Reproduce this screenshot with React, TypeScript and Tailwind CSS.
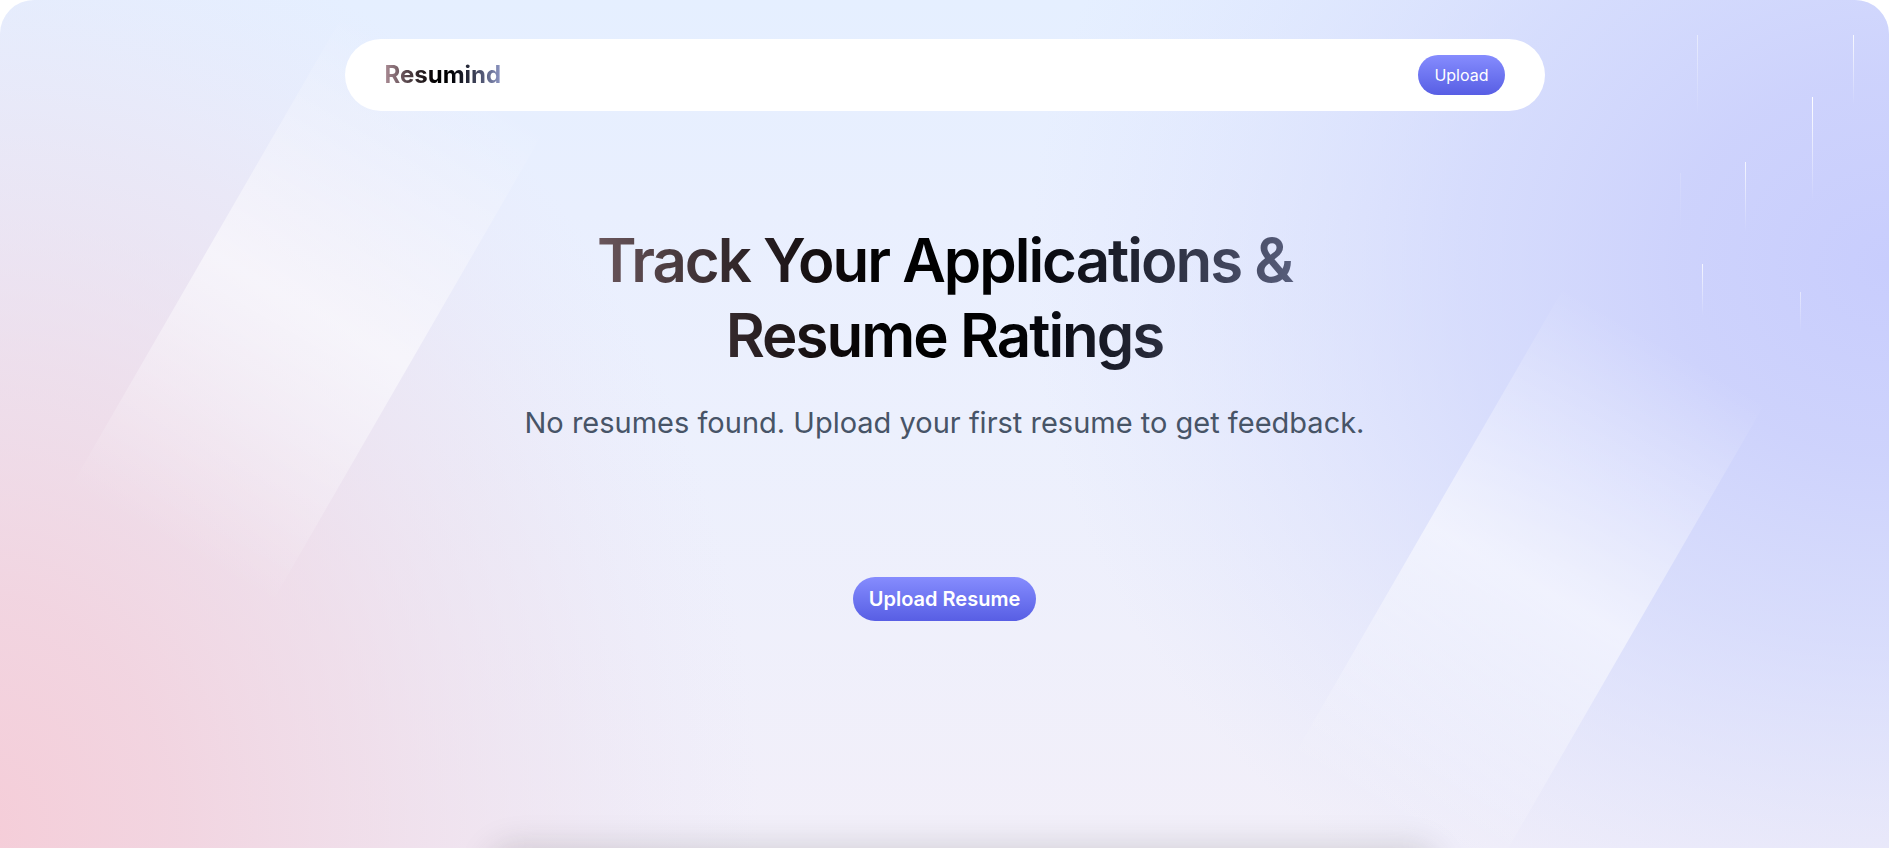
const streaks = [
  { x: 1697, y: 35, h: 80, o: 0.5 },
  { x: 1853, y: 35, h: 70, o: 0.85 },
  { x: 1812, y: 97, h: 104, o: 1 },
  { x: 1745, y: 162, h: 70, o: 0.8 },
  { x: 1680, y: 173, h: 60, o: 0.15 },
  { x: 1702, y: 264, h: 52, o: 0.8 },
  { x: 1800, y: 292, h: 40, o: 0.5 },
];

function Backdrop() {
  return (
    <svg
      aria-hidden="true"
      className="absolute inset-0 h-full w-full"
      viewBox="0 0 1889 848"
      preserveAspectRatio="xMidYMid slice"
    >
      <defs>
        <linearGradient id="base" x1="0" y1="0" x2="0" y2="1">
          <stop offset="0" stopColor="#e5efff" />
          <stop offset="0.25" stopColor="#e9effe" />
          <stop offset="0.5" stopColor="#ecf0fd" />
          <stop offset="1" stopColor="#f2eff9" />
        </linearGradient>
        <radialGradient
          id="pink"
          gradientUnits="userSpaceOnUse"
          cx="0"
          cy="0"
          r="1"
          gradientTransform="translate(-20 830) scale(780 940)"
        >
          <stop offset="0" stopColor="#f5cdd8" />
          <stop offset="0.25" stopColor="#f2d0dc" stopOpacity="0.85" />
          <stop offset="0.5" stopColor="#efd4e1" stopOpacity="0.6" />
          <stop offset="0.75" stopColor="#ebdbea" stopOpacity="0.34" />
          <stop offset="1" stopColor="#e8e2f6" stopOpacity="0" />
        </radialGradient>
        <radialGradient
          id="blue"
          gradientUnits="userSpaceOnUse"
          cx="0"
          cy="0"
          r="1"
          gradientTransform="translate(1889 265) scale(860 760)"
        >
          <stop offset="0" stopColor="#c8cdfd" />
          <stop offset="0.25" stopColor="#cbd0fc" stopOpacity="0.92" />
          <stop offset="0.5" stopColor="#ced4fc" stopOpacity="0.68" />
          <stop offset="0.75" stopColor="#d2d8fc" stopOpacity="0.32" />
          <stop offset="1" stopColor="#d8defe" stopOpacity="0" />
        </radialGradient>
        <linearGradient id="beam" x1="0" y1="0" x2="0" y2="1">
          <stop offset="0" stopColor="#fff" stopOpacity="0" />
          <stop offset="0.5" stopColor="#fff" stopOpacity="0.56" />
          <stop offset="1" stopColor="#fff" stopOpacity="0" />
        </linearGradient>
        <linearGradient id="streak" x1="0" y1="0" x2="0" y2="1">
          <stop offset="0" stopColor="#fff" />
          <stop offset="1" stopColor="#fff" stopOpacity="0" />
        </linearGradient>
      </defs>
      <rect width="1889" height="848" fill="url(#base)" />
      <rect width="1889" height="848" fill="url(#pink)" />
      <rect width="1889" height="848" fill="url(#blue)" />
      <g fill="url(#beam)">
        <rect x="-116" y="-275" width="232" height="550" transform="translate(308 308) rotate(30)" />
        <rect x="-116" y="-275" width="232" height="550" transform="translate(1528 582) rotate(30)" />
      </g>
      <g fill="url(#streak)">
        {streaks.map((s) => (
          <rect key={s.x} x={s.x} y={s.y} width="1" height={s.h} opacity={s.o} />
        ))}
      </g>
    </svg>
  );
}

export default function App() {
  return (
    <div className="bg-white font-['Inter',sans-serif]">
      <div className="relative min-h-screen overflow-hidden rounded-t-[34px]">
        <Backdrop />
        <div
          aria-hidden="true"
          className="absolute top-full left-[26%] h-24 w-1/2 rounded-3xl shadow-[0_0_32px_2px_rgba(50,45,40,0.17)]"
        />
        <div className="relative flex flex-col items-center px-4 pt-[39px]">
          <nav className="flex w-full max-w-[1200px] items-center justify-between rounded-full bg-white px-10 py-4">
            <a
              href="#home"
              className="bg-linear-to-r from-[#ab8c95] via-black to-[#8e97c5] bg-clip-text text-2xl font-bold text-transparent"
            >
              Resumind
            </a>
            <a
              href="#upload"
              className="rounded-full bg-linear-to-b from-[#868cfe] to-[#585ee4] px-4 py-2 text-base text-white"
            >
              Upload
            </a>
          </nav>
          <main className="flex w-full flex-col items-center pt-28 text-center">
            <h1 className="w-full max-w-[980px] bg-linear-to-r from-[#ab8c95] via-black to-[#8e97c5] bg-clip-text text-6xl leading-[75px] font-semibold tracking-[-2px] text-transparent">
              Track Your Applications &amp;
              <br />
              Resume Ratings
            </h1>
            <h2 className="mt-8 text-[29px] leading-9 text-[#475467]">
              No resumes found. Upload your first resume to get feedback.
            </h2>
            <a
              href="#upload"
              className="mt-[136px] rounded-full bg-linear-to-b from-[#868cfe] to-[#585ee4] px-4 py-2 text-xl font-semibold text-white"
            >
              Upload Resume
            </a>
          </main>
        </div>
      </div>
    </div>
  );
}
